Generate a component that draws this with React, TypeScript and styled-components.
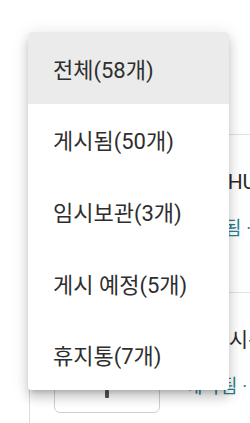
import React, { useState } from 'react';
import styled, { createGlobalStyle } from 'styled-components';

const GlobalStyle = createGlobalStyle`
  html, body {
    margin: 0;
    padding: 0;
    background: #ffffff;
  }
  body {
    font-family: Roboto, "Noto Sans CJK KR", sans-serif;
    overflow: hidden;
  }
`;

const Screen = styled.div`
  position: relative;
  width: 250px;
  height: 423px;
  overflow: hidden;
  background: #ffffff;
`;

const PostList = styled.div`
  margin: 134px 0 0 29px;
  border-left: 1px solid #dcdcdc;
  border-top: 1px solid #e2e2e2;
`;

const PostRow = styled.div`
  display: flex;
  align-items: flex-start;
  gap: 25px;
  height: 158px;
  padding: 34px 0 0 24px;
  box-sizing: border-box;
  border-bottom: 1px solid #e2e2e2;
`;

const Thumb = styled.div<{ $hidden?: boolean }>`
  flex: none;
  width: 106px;
  height: 85px;
  margin-top: 1px;
  border: 1px solid #cfcfcf;
  border-radius: 6px;
  box-sizing: border-box;
  display: flex;
  align-items: center;
  justify-content: center;
  visibility: ${({ $hidden }) => ($hidden ? 'hidden' : 'visible')};
`;

const PostText = styled.div`
  display: flex;
  flex-direction: column;
  gap: 22px;
  white-space: nowrap;
`;

const PostTitle = styled.div<{ $shift?: number }>`
  font-size: 21px;
  line-height: 26px;
  color: #2b2b2b;
  padding-left: ${({ $shift }) => $shift ?? 0}px;
`;

const PostMeta = styled.div<{ $shift?: number }>`
  font-size: 19px;
  line-height: 24px;
  color: #2f7f8e;
  padding-left: ${({ $shift }) => $shift ?? 0}px;
`;

const Menu = styled.ul`
  position: absolute;
  left: 28px;
  top: 32px;
  width: 201px;
  margin: 0;
  padding: 0;
  list-style: none;
  background: #ffffff;
  border-radius: 4px;
  overflow: hidden;
  box-shadow: 0 5px 5px -3px rgba(0, 0, 0, 0.18), 0 8px 10px 1px rgba(0, 0, 0, 0.12),
    0 3px 16px 2px rgba(0, 0, 0, 0.1);
`;

const MenuItem = styled.li<{ $active?: boolean }>`
  height: 71.6px;
  display: flex;
  align-items: center;
  padding: 0 0 0 25px;
  font-size: 22px;
  color: #2e2e2e;
  cursor: pointer;
  background: ${({ $active }) => ($active ? '#ebebeb' : '#ffffff')};
`;

const filters = [
  { key: 'all', label: '전체(58개)' },
  { key: 'published', label: '게시됨(50개)' },
  { key: 'draft', label: '임시보관(3개)' },
  { key: 'scheduled', label: '게시 예정(5개)' },
  { key: 'trash', label: '휴지통(7개)' },
];

export default function App() {
  const [selected, setSelected] = useState('all');

  return (
    <Screen>
      <GlobalStyle />
      <PostList>
        <PostRow>
          <Thumb $hidden />
          <PostText>
            <PostTitle $shift={4}>센터HUB 오픈</PostTitle>
            <PostMeta $shift={4}>게시됨 · 3일</PostMeta>
          </PostText>
        </PostRow>
        <PostRow>
          <Thumb>
            <svg width="40" height="60" viewBox="0 0 40 60">
              <rect x="18" y="49" width="4" height="8" rx="1" fill="#555" />
            </svg>
          </Thumb>
          <PostText>
            <PostTitle>여름 시즌</PostTitle>
            <PostMeta>예약됨 · 내일</PostMeta>
          </PostText>
        </PostRow>
      </PostList>

      <Menu>
        {filters.map((f) => (
          <MenuItem key={f.key} $active={selected === f.key} onClick={() => setSelected(f.key)}>
            {f.label}
          </MenuItem>
        ))}
      </Menu>
    </Screen>
  );
}
